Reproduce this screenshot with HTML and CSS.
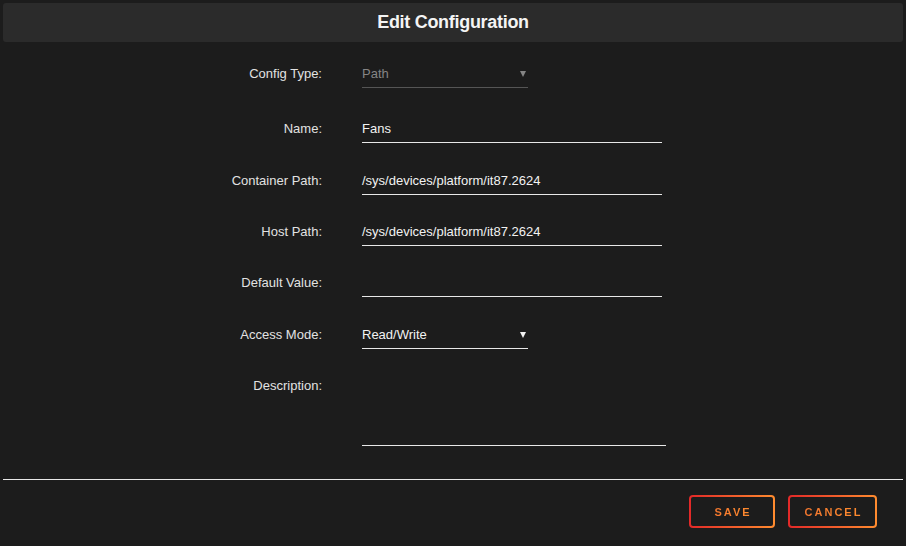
FILE: index.html
```html
<!DOCTYPE html>
<html>
<head>
<meta charset="utf-8">
<link rel="stylesheet" href="styles.css">
</head>
<body>
<div class="dialog">
  <div class="header"><h1 class="title">Edit Configuration</h1></div>
  <div class="form">
    <div class="row">
      <div class="label">Config Type:</div>
      <div class="field select disabled"><span class="value">Path</span><span class="arrow"></span></div>
    </div>
    <div class="row spaced">
      <div class="label">Name:</div>
      <div class="field text"><span class="value">Fans</span></div>
    </div>
    <div class="row nudge">
      <div class="label">Container Path:</div>
      <div class="field text"><span class="value">/sys/devices/platform/it87.2624</span></div>
    </div>
    <div class="row">
      <div class="label">Host Path:</div>
      <div class="field text"><span class="value">/sys/devices/platform/it87.2624</span></div>
    </div>
    <div class="row">
      <div class="label">Default Value:</div>
      <div class="field text"><span class="value"></span></div>
    </div>
    <div class="row nudge">
      <div class="label">Access Mode:</div>
      <div class="field select"><span class="value">Read/Write</span><span class="arrow"></span></div>
    </div>
    <div class="row">
      <div class="label">Description:</div>
      <div class="field area"></div>
    </div>
  </div>
  <div class="separator"></div>
  <div class="buttons">
    <button class="btn save"><span class="btn-text">SAVE</span></button>
    <button class="btn cancel"><span class="btn-text">CANCEL</span></button>
  </div>
</div>
</body>
</html>
```

FILE: styles.css
```css
html, body {
  margin: 0;
  padding: 0;
  background: #1c1c1c;
  width: 906px;
  height: 546px;
  overflow: hidden;
}
body {
  font-family: "Liberation Sans", Arial, sans-serif;
  font-size: 13px;
  color: #e4e4e4;
}
.dialog {
  padding: 3px;
  display: flex;
  flex-direction: column;
}
.header {
  height: 39px;
  background: #2b2b2b;
  border-radius: 3px;
  display: flex;
  align-items: center;
  justify-content: center;
}
.title {
  margin: 0;
  font-size: 18px;
  font-weight: bold;
  color: #f4f4f4;
  letter-spacing: -0.3px;
}
.form {
  display: flex;
  flex-direction: column;
  gap: 27px;
  padding-top: 22px;
}
.row {
  display: flex;
  align-items: flex-start;
  gap: 40px;
}
.row.spaced {
  margin-top: 4px;
}
.row.nudge {
  margin-top: 1px;
}
.label {
  width: 319px;
  text-align: right;
  line-height: 20px;
  color: #e2e2e2;
}
.field {
  box-sizing: border-box;
  height: 24px;
  line-height: 20px;
  padding-bottom: 3px;
  border-bottom: 1px solid #e8e8e8;
  color: #f2f2f2;
  display: flex;
  align-items: flex-start;
}
.field.text {
  width: 300px;
}
.field.select {
  width: 166px;
  justify-content: space-between;
}
.field.disabled {
  border-bottom-color: #555;
  color: #858585;
}
.field.area {
  width: 304px;
  height: 70px;
}
.arrow {
  width: 0;
  height: 0;
  margin-top: 7px;
  margin-right: 2px;
  border-left: 3px solid transparent;
  border-right: 3px solid transparent;
  border-top: 6px solid #f2f2f2;
}
.disabled .arrow {
  border-top-color: #858585;
}
.separator {
  margin-top: 33px;
  height: 1px;
  background: #e8e8e8;
}
.buttons {
  display: flex;
  justify-content: flex-end;
  gap: 13px;
  padding: 15px 26px 0 0;
}
.btn {
  box-sizing: border-box;
  height: 33px;
  border: 2px solid transparent;
  border-radius: 4px;
  background: linear-gradient(#1c1c1c, #1c1c1c) padding-box,
              linear-gradient(90deg, #e22828, #ff8c2f) border-box;
  font-family: "Liberation Sans", Arial, sans-serif;
  font-size: 11px;
  font-weight: bold;
  letter-spacing: 2px;
  padding: 0;
  display: flex;
  align-items: center;
  justify-content: center;
}
.btn.save { width: 86px; }
.btn.cancel { width: 89px; }
.btn-text {
  background: linear-gradient(90deg, #f2762e, #ff8c2f);
  -webkit-background-clip: text;
  background-clip: text;
  color: transparent;
  margin-right: -2px;
}
```
